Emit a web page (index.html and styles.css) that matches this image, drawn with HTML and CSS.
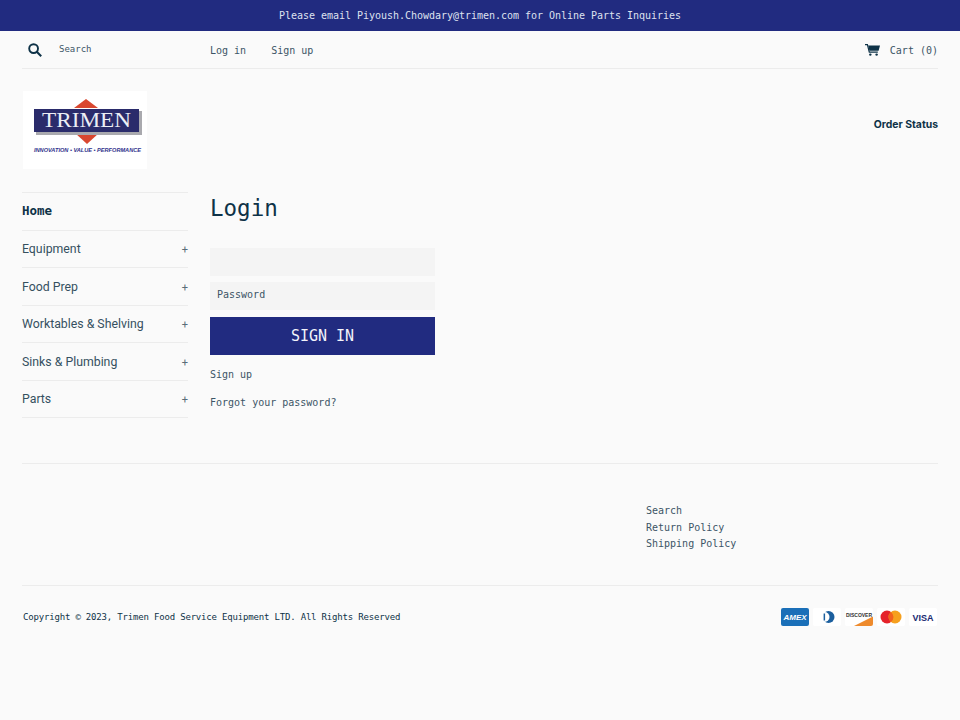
FILE: index.html
```html
<!DOCTYPE html>
<html lang="en">
<head>
<meta charset="utf-8">
<title>Login</title>
<link rel="stylesheet" href="styles.css">
</head>
<body>
<div class="announce">Please email Piyoush.Chowdary@trimen.com for Online Parts Inquiries</div>
<div class="wrap">
  <div class="topbar">
    <div class="search">
      <svg class="search-icon" width="14" height="14" viewBox="0 0 14 14"><circle cx="5.6" cy="5.6" r="4.4" fill="none" stroke="#0e3247" stroke-width="1.9"/><path d="M8.8 8.8L13.2 13.2" stroke="#0e3247" stroke-width="2.1"/></svg>
      <span class="search-label">Search</span>
    </div>
    <nav class="account"><a>Log in</a><a>Sign up</a></nav>
    <div class="cart">
      <svg width="15" height="12" viewBox="0 0 15 12"><path d="M0 .6h2.4l1.9 7.6h8.5" fill="none" stroke="#0e3247" stroke-width="1.2"/><path d="M3.2 1.6H15l-1.4 5.2H4.4z" fill="#0e3247"/><circle cx="5.3" cy="10.6" r="1.2" fill="#0e3247"/><circle cx="11.6" cy="10.6" r="1.2" fill="#0e3247"/></svg>
      <span>Cart (0)</span>
    </div>
  </div>
  <header class="masthead">
    <div class="logo">
      <svg width="124" height="78" viewBox="0 0 124 78">
        <path d="M63 8L75 17H51z" fill="#d9472f"/>
        <path d="M52 42H76L64 53z" fill="#d9472f"/>
        <rect x="13" y="20" width="106" height="24" fill="#a9a9ae"/>
        <rect x="11" y="18" width="105" height="23" fill="#2a2b6b"/>
        <text x="19" y="36" class="logo-name" textLength="89" lengthAdjust="spacingAndGlyphs">TRIMEN</text>
        <text x="11" y="60.500" class="logo-tag" textLength="107" lengthAdjust="spacingAndGlyphs">INNOVATION • VALUE • PERFORMANCE</text>
      </svg>
    </div>
    <a class="order">Order Status</a>
  </header>
  <div class="main">
    <ul class="side">
      <li class="active"><span>Home</span></li>
      <li><span>Equipment</span><i>+</i></li>
      <li><span>Food Prep</span><i>+</i></li>
      <li><span>Worktables &amp; Shelving</span><i>+</i></li>
      <li><span>Sinks &amp; Plumbing</span><i>+</i></li>
      <li><span>Parts</span><i>+</i></li>
    </ul>
    <section class="login">
      <h1>Login</h1>
      <div class="field"></div>
      <div class="field">Password</div>
      <button class="btn">SIGN IN</button>
      <p class="link first">Sign up</p>
      <p class="link">Forgot your password?</p>
    </section>
  </div>
  <footer>
    <div class="foot-links"><a>Search</a><a>Return Policy</a><a>Shipping Policy</a></div>
    <div class="foot-bottom">
      <span class="copy">Copyright © 2023, Trimen Food Service Equipment LTD. All Rights Reserved</span>
      <div class="pay">
        <svg width="28" height="18" viewBox="0 0 28 18"><rect width="28" height="18" rx="2" fill="#1a6fb8"/><text x="14" y="12" class="p-amex" text-anchor="middle">AMEX</text></svg>
        <svg width="28" height="18" viewBox="0 0 28 18"><rect width="28" height="18" rx="2" fill="#fff"/><circle cx="15.500" cy="9" r="6" fill="#1b5f9e"/><circle cx="11.500" cy="9" r="5" fill="#fff"/><rect x="10.600" y="5.500" width="1.500" height="7" fill="#1b5f9e"/></svg>
        <svg width="28" height="18" viewBox="0 0 28 18"><rect width="28" height="18" rx="2" fill="#fff"/><path d="M9 18L28 8.500V16a2 2 0 0 1-2 2z" fill="#ee8a2c"/><text x="14" y="8.500" class="p-disc" text-anchor="middle">DISCOVER</text></svg>
        <svg width="28" height="18" viewBox="0 0 28 18"><rect width="28" height="18" rx="2" fill="#fff"/><circle cx="10" cy="9" r="6.500" fill="#e5232b"/><circle cx="18" cy="9" r="6.500" fill="#f6a01e"/><path d="M14 3.900a6.500 6.500 0 0 1 0 10.200a6.500 6.500 0 0 1 0-10.200z" fill="#f2611f"/></svg>
        <svg width="28" height="18" viewBox="0 0 28 18"><rect width="28" height="18" rx="2" fill="#fff"/><text x="14" y="12.500" class="p-visa" text-anchor="middle">VISA</text></svg>
      </div>
    </div>
  </footer>
</div>
</body>
</html>
```
FILE: styles.css
```css
* { box-sizing: border-box; }
html, body { margin: 0; padding: 0; }
body {
  background: #fafafa;
  color: #0e3247;
  font-family: "DejaVu Sans Mono", monospace;
  font-size: 10px;
  min-height: 720px;
}
.announce {
  height: 31px;
  background: #212b80;
  color: #dfe1ef;
  line-height: 31px;
  text-align: center;
  letter-spacing: -.02px;
}
.wrap { padding: 0 22px; }
.topbar {
  height: 38px;
  padding-top: 1px;
  display: flex;
  align-items: center;
  border-bottom: 1px solid #ececec;
}
.search { width: 188px; display: flex; align-items: center; padding-left: 6px; }
.search-label { margin-left: 17px; margin-top: -3px; font-size: 9px; color: #3c5566; }
.account { display: flex; gap: 25px; color: #3c5566; }
.cart { margin-left: auto; display: flex; align-items: center; gap: 10px; color: #3c5566; }
.masthead {
  display: flex;
  justify-content: space-between;
  align-items: flex-start;
  padding-top: 22px;
  height: 123px;
}
.logo {
  width: 124px;
  height: 78px;
  background: #fff;
  margin-left: 1px;
}
.logo svg { display: block; }
.logo-name { font-family: "Liberation Serif", serif; font-size: 22px; fill: #eceef5; }
.logo-tag { font-family: "Liberation Sans", sans-serif; font-size: 5.600px; font-weight: 700; font-style: italic; fill: #30328c; }
.order {
  font-family: "Inter", sans-serif;
  font-weight: 700;
  font-size: 10.400px;
  margin-top: 27px;
}
.main { display: flex; gap: 22px; height: 272px; border-bottom: 1px solid #ececec; }
.side { list-style: none; margin: 0; padding: 0; width: 166px; height: 226px; border-top: 1px solid #ececec; }
.side li {
  height: 37.500px;
  padding-top: 1px;
  display: flex;
  align-items: center;
  justify-content: space-between;
  border-bottom: 1px solid #ececec;
  font-family: "Roboto", sans-serif;
  font-size: 12.300px;
  color: #35505f;
}
.side li.active { font-family: "DejaVu Sans Mono", monospace; font-weight: 700; font-size: 12.500px; color: #0e3247; padding: 0 0 2px; }
.side i { font-style: normal; font-size: 11px; color: #5a6d79; padding-top: 1px; }
.login { width: 225px; }
h1 { margin: 0; font-size: 22.500px; font-weight: 400; line-height: 30px; padding-top: 1px; height: 56px; }
.field {
  height: 28px;
  background: #f4f4f4;
  margin-bottom: 6px;
  padding-left: 7px;
  line-height: 25px;
  color: #3c5566;
}
.field + .field { margin-bottom: 7px; }
.btn {
  display: block;
  width: 100%;
  height: 38px;
  border: 0;
  background: #212b80;
  color: #f2f3fa;
  font-family: "DejaVu Sans Mono", monospace;
  font-size: 15px;
}
.link { margin: 0; height: 28px; line-height: 28px; color: #3c5566; }
.link.first { margin-top: 6px; }
.foot-links {
  height: 122px;
  padding: 39px 0 0 624px;
  display: flex;
  flex-direction: column;
  line-height: 16.500px;
  border-bottom: 1px solid #ececec;
  color: #3c5566;
}
.foot-bottom { display: flex; justify-content: space-between; align-items: center; height: 62px; }
.copy { font-size: 9px; margin-left: 1px; letter-spacing: -.18px; }
.pay { display: flex; gap: 4px; margin-right: 1px; }
.p-amex { font: italic 700 8px "Liberation Sans", sans-serif; fill: #fff; }
.p-disc { font: 700 5px "Liberation Sans", sans-serif; fill: #333; }
.p-visa { font: 700 9px "Liberation Sans", sans-serif; fill: #1a2a72; }
```
